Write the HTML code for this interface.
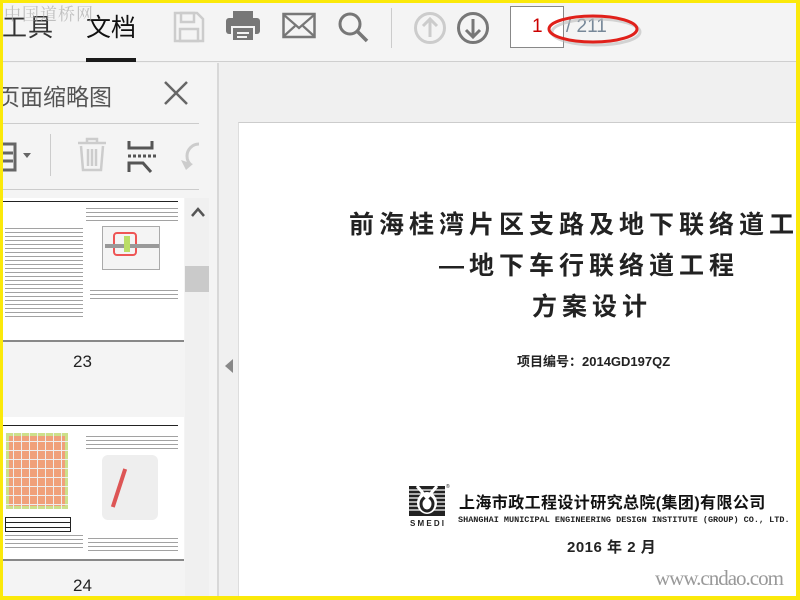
<!DOCTYPE html>
<html><head><meta charset="utf-8"><style>
*{margin:0;padding:0;box-sizing:border-box}
body{width:800px;height:600px;overflow:hidden;background:#f0f0f0;position:relative;font-family:"Liberation Sans","Noto Sans CJK SC",sans-serif}
.a{position:absolute}
.lines{background:repeating-linear-gradient(#555 0 1px,#fff 1px 4px);opacity:.55}
.cj{font-family:"Liberation Sans","Noto Sans CJK SC",sans-serif}
</style></head><body>
<div class="a" style="left:0;top:0;width:800px;height:62px;background:#f4f4f4;border-bottom:1px solid #cfcfcf"></div>
<div class="a cj" style="left:2px;top:8px;font-size:25px;color:#333;letter-spacing:1px">工具</div>
<div class="a cj" style="left:86px;top:8px;font-size:25px;color:#111">文档</div>
<div class="a" style="left:86px;top:58px;width:50px;height:4px;background:#1a1a1a"></div>
<div class="a cj" style="left:4px;top:0px;font-size:17px;color:#aaa;opacity:.7;letter-spacing:1px;font-family:'Noto Serif CJK SC',serif">中国道桥网</div>
<svg class="a" style="left:172px;top:10px" width="34" height="34" viewBox="0 0 34 34"><path d="M3 3h22l6 6v22H3z" fill="none" stroke="#ccc" stroke-width="2.5"/><rect x="9" y="3" width="13" height="9" fill="none" stroke="#ccc" stroke-width="2.5"/><rect x="8" y="19" width="18" height="12" fill="none" stroke="#ccc" stroke-width="2.5"/></svg>
<svg class="a" style="left:225px;top:9px" width="36" height="34" viewBox="0 0 36 34"><rect x="8" y="2" width="20" height="8" fill="#777"/><rect x="1" y="9" width="34" height="16" rx="3" fill="#777"/><rect x="7" y="18" width="22" height="14" fill="#777" stroke="#f4f4f4" stroke-width="2"/><rect x="12" y="23" width="12" height="2" fill="#f4f4f4"/><rect x="12" y="27" width="10" height="2" fill="#f4f4f4"/></svg>
<svg class="a" style="left:282px;top:12px" width="34" height="28" viewBox="0 0 34 28"><rect x="1.5" y="2" width="31" height="23" fill="none" stroke="#777" stroke-width="2.5"/><path d="M2 3l15 13 15-13M2 24l11-10M32 24l-11-10" fill="none" stroke="#777" stroke-width="2.2"/></svg>
<svg class="a" style="left:337px;top:10px" width="34" height="34" viewBox="0 0 34 34"><circle cx="13" cy="14" r="10" fill="none" stroke="#777" stroke-width="3"/><path d="M20 21l10 10" stroke="#777" stroke-width="3.5"/></svg>
<div class="a" style="left:391px;top:8px;width:1px;height:40px;background:#ccc"></div>
<svg class="a" style="left:413px;top:11px" width="34" height="34" viewBox="0 0 34 34"><circle cx="17" cy="17" r="14.5" fill="none" stroke="#ccc" stroke-width="3"/><path d="M17 26V9M10 15l7-7 7 7" fill="none" stroke="#ccc" stroke-width="3"/></svg>
<svg class="a" style="left:456px;top:11px" width="34" height="34" viewBox="0 0 34 34"><circle cx="17" cy="17" r="14.5" fill="none" stroke="#777" stroke-width="3"/><path d="M17 8v17M10 19l7 7 7-7" fill="none" stroke="#777" stroke-width="3"/></svg>
<div class="a" style="left:510px;top:6px;width:54px;height:42px;background:#fff;border:1px solid #888"></div>
<div class="a" style="left:532px;top:16px;font-size:19px;color:#c00">1</div>
<div class="a" style="left:566px;top:16px;font-size:19px;color:#789">/ 211</div>
<svg class="a" style="left:544px;top:12px" width="100" height="36" viewBox="0 0 100 36"><ellipse cx="52" cy="20" rx="44" ry="13" fill="none" stroke="#bbb" stroke-width="3" opacity=".6"/><ellipse cx="49" cy="17" rx="44" ry="13" fill="none" stroke="#e0201a" stroke-width="3"/></svg>
<div class="a" style="left:0;top:63px;width:219px;height:537px;background:#f4f4f4;border-right:2px solid #d8d8d8"></div>
<div class="a cj" style="left:-3px;top:78px;font-size:23px;color:#555">页面缩略图</div>
<svg class="a" style="left:163px;top:80px" width="26" height="26"><path d="M2 2l22 22M24 2L2 24" stroke="#666" stroke-width="2.5"/></svg>
<div class="a" style="left:0;top:123px;width:199px;height:1px;background:#ccc"></div>
<svg class="a" style="left:0;top:140px" width="40" height="34"><path d="M0 4h15v26H0M2 13h11M2 21h11" fill="none" stroke="#666" stroke-width="3"/><path d="M23 13h8l-4 5z" fill="#666"/></svg>
<div class="a" style="left:50px;top:134px;width:1px;height:42px;background:#ccc"></div>
<svg class="a" style="left:75px;top:137px" width="34" height="36"><path d="M3 6h28M12 6V2h10v4M6 9l2 24h18l2-24M13 12v17M17 12v17M21 12v17" fill="none" stroke="#ccc" stroke-width="2.5"/></svg>
<svg class="a" style="left:127px;top:139px" width="30" height="34"><path d="M2 2v7h23V2M2 33V24h14l8 9" fill="none" stroke="#555" stroke-width="3"/><path d="M1 17h28" stroke="#555" stroke-width="3" stroke-dasharray="3 2"/></svg>
<svg class="a" style="left:175px;top:140px" width="25" height="32"><path d="M24 4a12 12 0 0 0-12 12 12 12 0 0 0 4 9" fill="none" stroke="#ccc" stroke-width="3"/><path d="M6 20l5 10 7-6z" fill="#ccc"/></svg>
<div class="a" style="left:0;top:189px;width:199px;height:1px;background:#ccc"></div>
<div class="a" style="left:3px;top:198px;width:181px;height:144px;background:#fff;border-bottom:2px solid #888"></div>
<div class="a" style="left:3px;top:201px;width:175px;height:1px;background:#222"></div>
<div class="a lines" style="left:5px;top:228px;width:78px;height:90px"></div>
<div class="a lines" style="left:86px;top:208px;width:92px;height:14px"></div>
<div class="a" style="left:102px;top:226px;width:58px;height:44px;border:1px solid #aaa;background:#f4f4f4"></div>
<div class="a" style="left:113px;top:232px;width:24px;height:24px;border:2px solid #e55;border-radius:4px"></div>
<div class="a" style="left:105px;top:244px;width:54px;height:4px;background:#999"></div>
<div class="a" style="left:124px;top:236px;width:6px;height:16px;background:#bd6"></div>
<div class="a lines" style="left:90px;top:290px;width:88px;height:10px"></div>
<div class="a" style="left:73px;top:352px;font-size:17px;color:#222">23</div>
<div class="a" style="left:3px;top:417px;width:181px;height:144px;background:#fff;border-bottom:2px solid #888"></div>
<div class="a" style="left:3px;top:425px;width:175px;height:1px;background:#222"></div>
<div class="a" style="left:6px;top:433px;width:62px;height:76px;background:#f0a07a;border:3px solid #cde08a"></div>
<div class="a" style="left:6px;top:433px;width:62px;height:76px;background:repeating-linear-gradient(90deg,transparent 0 7px,#eee 7px 8px),repeating-linear-gradient(transparent 0 8px,#eee 8px 9px)"></div>
<div class="a" style="left:5px;top:517px;width:66px;height:15px;border:1px solid #222;background:repeating-linear-gradient(transparent 0 4px,#222 4px 5px)"></div>
<div class="a lines" style="left:5px;top:535px;width:78px;height:16px"></div>
<div class="a lines" style="left:86px;top:436px;width:92px;height:16px"></div>
<div class="a" style="left:102px;top:455px;width:56px;height:65px;background:#eee;border-radius:6px"></div>
<div class="a" style="left:117px;top:468px;width:4px;height:40px;background:#d55;transform:rotate(18deg)"></div>
<div class="a lines" style="left:88px;top:538px;width:90px;height:14px"></div>
<div class="a" style="left:73px;top:576px;font-size:17px;color:#222">24</div>
<div class="a" style="left:185px;top:198px;width:24px;height:402px;background:#f0f0f0"></div>
<svg class="a" style="left:190px;top:206px" width="16" height="12"><path d="M2 10l6-7 6 7" fill="none" stroke="#555" stroke-width="2.5"/></svg>
<div class="a" style="left:185px;top:266px;width:24px;height:26px;background:#cacaca"></div>
<svg class="a" style="left:224px;top:358px" width="10" height="16"><path d="M9 1v14L1 8z" fill="#888"/></svg>
<div class="a" style="left:238px;top:122px;width:562px;height:478px;background:#fff;border-top:1px solid #ccc;border-left:1px solid #ddd"></div>
<div class="a cj" style="left:349px;top:205px;font-size:25px;font-weight:bold;color:#222;letter-spacing:5px;white-space:nowrap">前海桂湾片区支路及地下联络道工</div>
<div class="a cj" style="left:439px;top:246px;font-size:25px;font-weight:bold;color:#222;letter-spacing:5px;white-space:nowrap">—地下车行联络道工程</div>
<div class="a cj" style="left:532px;top:287px;font-size:25px;font-weight:bold;color:#222;letter-spacing:5px">方案设计</div>
<div class="a cj" style="left:517px;top:351px;font-size:13px;font-weight:bold;color:#222">项目编号：2014GD197QZ</div>
<svg class="a" style="left:408px;top:482px" width="42" height="46" viewBox="0 0 42 46"><rect x="1" y="4" width="36" height="30" fill="#222"/><path d="M1 8h36M1 12h36M1 16h36M1 20h36M1 24h36M1 28h36" stroke="#fff" stroke-width="1.2"/><ellipse cx="19" cy="21" rx="10" ry="11" fill="#fff"/><ellipse cx="19" cy="22" rx="6" ry="7" fill="none" stroke="#222" stroke-width="3"/><path d="M9 4l10 12 10-12" fill="none" stroke="#fff" stroke-width="3"/><text x="19" y="44" font-size="8" font-weight="bold" text-anchor="middle" fill="#222" font-family="Liberation Sans" textLength="34">SMEDI</text><text x="38" y="6" font-size="5" fill="#222">®</text></svg>
<div class="a cj" style="left:459px;top:489px;font-size:16px;font-weight:bold;color:#111;letter-spacing:.4px;white-space:nowrap">上海市政工程设计研究总院(集团)有限公司</div>
<div class="a" style="left:458px;top:515px;font-size:8.5px;font-weight:bold;color:#222;font-family:'Liberation Mono',monospace;white-space:nowrap">SHANGHAI MUNICIPAL ENGINEERING DESIGN INSTITUTE (GROUP) CO., LTD.</div>
<div class="a cj" style="left:567px;top:536px;font-size:15px;font-weight:bold;color:#222;white-space:nowrap;letter-spacing:.5px">2016 年 2 月</div>
<div class="a" style="left:655px;top:566px;font-size:21px;color:#999;font-family:'Liberation Serif',serif;letter-spacing:-1px">www.cndao.com</div>
<div class="a" style="left:0;top:0;width:800px;height:600px;border-style:solid;border-color:#fbe90a;border-width:3px 4px 4px 3px"></div>
</body></html>
